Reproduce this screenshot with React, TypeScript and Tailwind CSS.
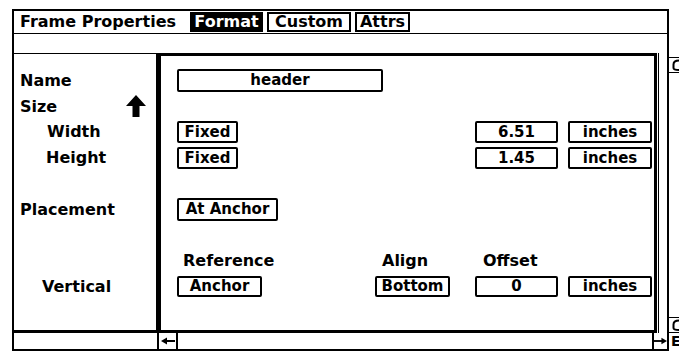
import React from 'react';

function Field({ label, className = '' }: { label: string; className?: string }) {
  return (
    <div
      className={`flex items-center justify-center border-2 border-black rounded-[2px] text-[15px] leading-none text-black ${className}`}
    >
      {label}
    </div>
  );
}

function UpArrow() {
  return (
    <svg width="20" height="22" viewBox="0 0 20 22">
      <path d="M10 0 L20 11 L13.5 11 L13.5 22 L6.5 22 L6.5 11 L0 11 Z" fill="black" />
    </svg>
  );
}

function SideArrow({ dir }: { dir: 'left' | 'right' }) {
  return (
    <svg width="14" height="8" viewBox="0 0 14 8" className={dir === 'right' ? 'rotate-180' : ''}>
      <path d="M0 4 L6 0.5 L6 7.5 Z" fill="black" />
      <rect x="5" y="3" width="9" height="2" fill="black" />
    </svg>
  );
}

function EdgeGlyph() {
  return (
    <svg width="10" height="14" viewBox="0 0 10 14">
      <path d="M10 2.5 Q4.5 2.5 4.5 6.5 L4.5 10 Q4.5 12 10 12" stroke="black" strokeWidth="2" fill="none" />
    </svg>
  );
}

const cols = 'grid grid-cols-[198px_100px_93px_84px]';

export default function App() {
  return (
    <div className="w-[679px] h-[352px] bg-white overflow-hidden flex pt-[9px] pl-[12px] font-['DejaVu_Sans',sans-serif] font-bold text-black">
      {/* frame */}
      <div className="w-[657px] h-[342px] flex flex-col border-2 border-black">
        {/* title bar */}
        <div className="h-[23px] border-b border-black flex items-center pl-[6px]">
          <span className="w-[170px] text-[16px] leading-none">Frame Properties</span>
          <span className="w-[73px] h-[20px] bg-black text-white text-[16px] leading-none flex items-center justify-center">
            Format
          </span>
          <span className="ml-[4px] w-[84px] h-[20px] border-2 border-black text-[16px] leading-none flex items-center justify-center">
            Custom
          </span>
          <span className="ml-[4px] w-[55px] h-[20px] border-2 border-black text-[16px] leading-none flex items-center justify-center">
            Attrs
          </span>
        </div>
        <div className="h-[19px]" />

        {/* main area */}
        <div className="h-[280px] flex">
          <div className="w-[143px] border-t border-r border-b-[3px] border-black flex flex-col pl-[6px] text-[16px] leading-[19px]">
            <div className="mt-[17px] h-[19px]">Name</div>
            <div className="mt-[5px] h-[22px] flex items-center">
              <span className="w-[106px]">Size</span>
              <UpArrow />
            </div>
            <div className="mt-[5px] h-[19px] pl-[27px]">Width</div>
            <div className="mt-[7px] h-[19px] pl-[26px]">Height</div>
            <div className="mt-[33px] h-[19px]">Placement</div>
            <div className="mt-[58px] h-[19px] pl-[22px]">Vertical</div>
          </div>

          <div className="w-[500px] border-l-4 border-t-[3px] border-r-[3px] border-b-[3px] border-black flex flex-col pl-[16px] pt-[13px]">
            <Field label="header" className="w-[206px] h-[23px]" />

            <div className={`${cols} mt-[29px] h-[22px]`}>
              <Field label="Fixed" className="w-[61px] h-[22px]" />
              <div />
              <Field label="6.51" className="w-[83px] h-[22px]" />
              <Field label="inches" className="w-[84px] h-[22px]" />
            </div>
            <div className={`${cols} mt-[4px] h-[22px]`}>
              <Field label="Fixed" className="w-[61px] h-[22px]" />
              <div />
              <Field label="1.45" className="w-[83px] h-[22px]" />
              <Field label="inches" className="w-[84px] h-[22px]" />
            </div>

            <Field label="At Anchor" className="mt-[29px] w-[101px] h-[23px]" />

            <div className={`${cols} mt-[30px] h-[19px] text-[16px] leading-[19px]`}>
              <span className="pl-[6px]">Reference</span>
              <span className="pl-[7px]">Align</span>
              <span className="pl-[8px]">Offset</span>
              <span />
            </div>
            <div className={`${cols} mt-[6px] h-[21px]`}>
              <Field label="Anchor" className="w-[85px] h-[21px]" />
              <Field label="Bottom" className="w-[75px] h-[21px]" />
              <Field label="0" className="w-[83px] h-[21px]" />
              <Field label="inches" className="w-[84px] h-[21px]" />
            </div>
          </div>

          {/* vertical scroll track */}
          <div className="ml-[1px] w-[9px] border-l border-black" />
        </div>

        {/* horizontal scroll row */}
        <div className="h-[16px] flex">
          <div className="w-[143px]" />
          <div className="w-[21px] border-l-2 border-r-2 border-black flex items-center justify-center">
            <SideArrow dir="left" />
          </div>
          <div className="flex-1" />
          <div className="w-[15px] border-l-2 border-black flex items-center justify-center">
            <SideArrow dir="right" />
          </div>
        </div>
      </div>

      {/* clipped edge column */}
      <div className="w-[10px] h-[342px] flex flex-col">
        <div className="mt-[48px] h-[16px] border-t border-b border-black flex items-center">
          <EdgeGlyph />
        </div>
        <div className="mt-[244px] h-[16px] border-t border-b border-black flex items-center">
          <EdgeGlyph />
        </div>
        <div className="h-[16px] flex items-center pl-[2px] text-[14px] leading-none">E</div>
      </div>
    </div>
  );
}
